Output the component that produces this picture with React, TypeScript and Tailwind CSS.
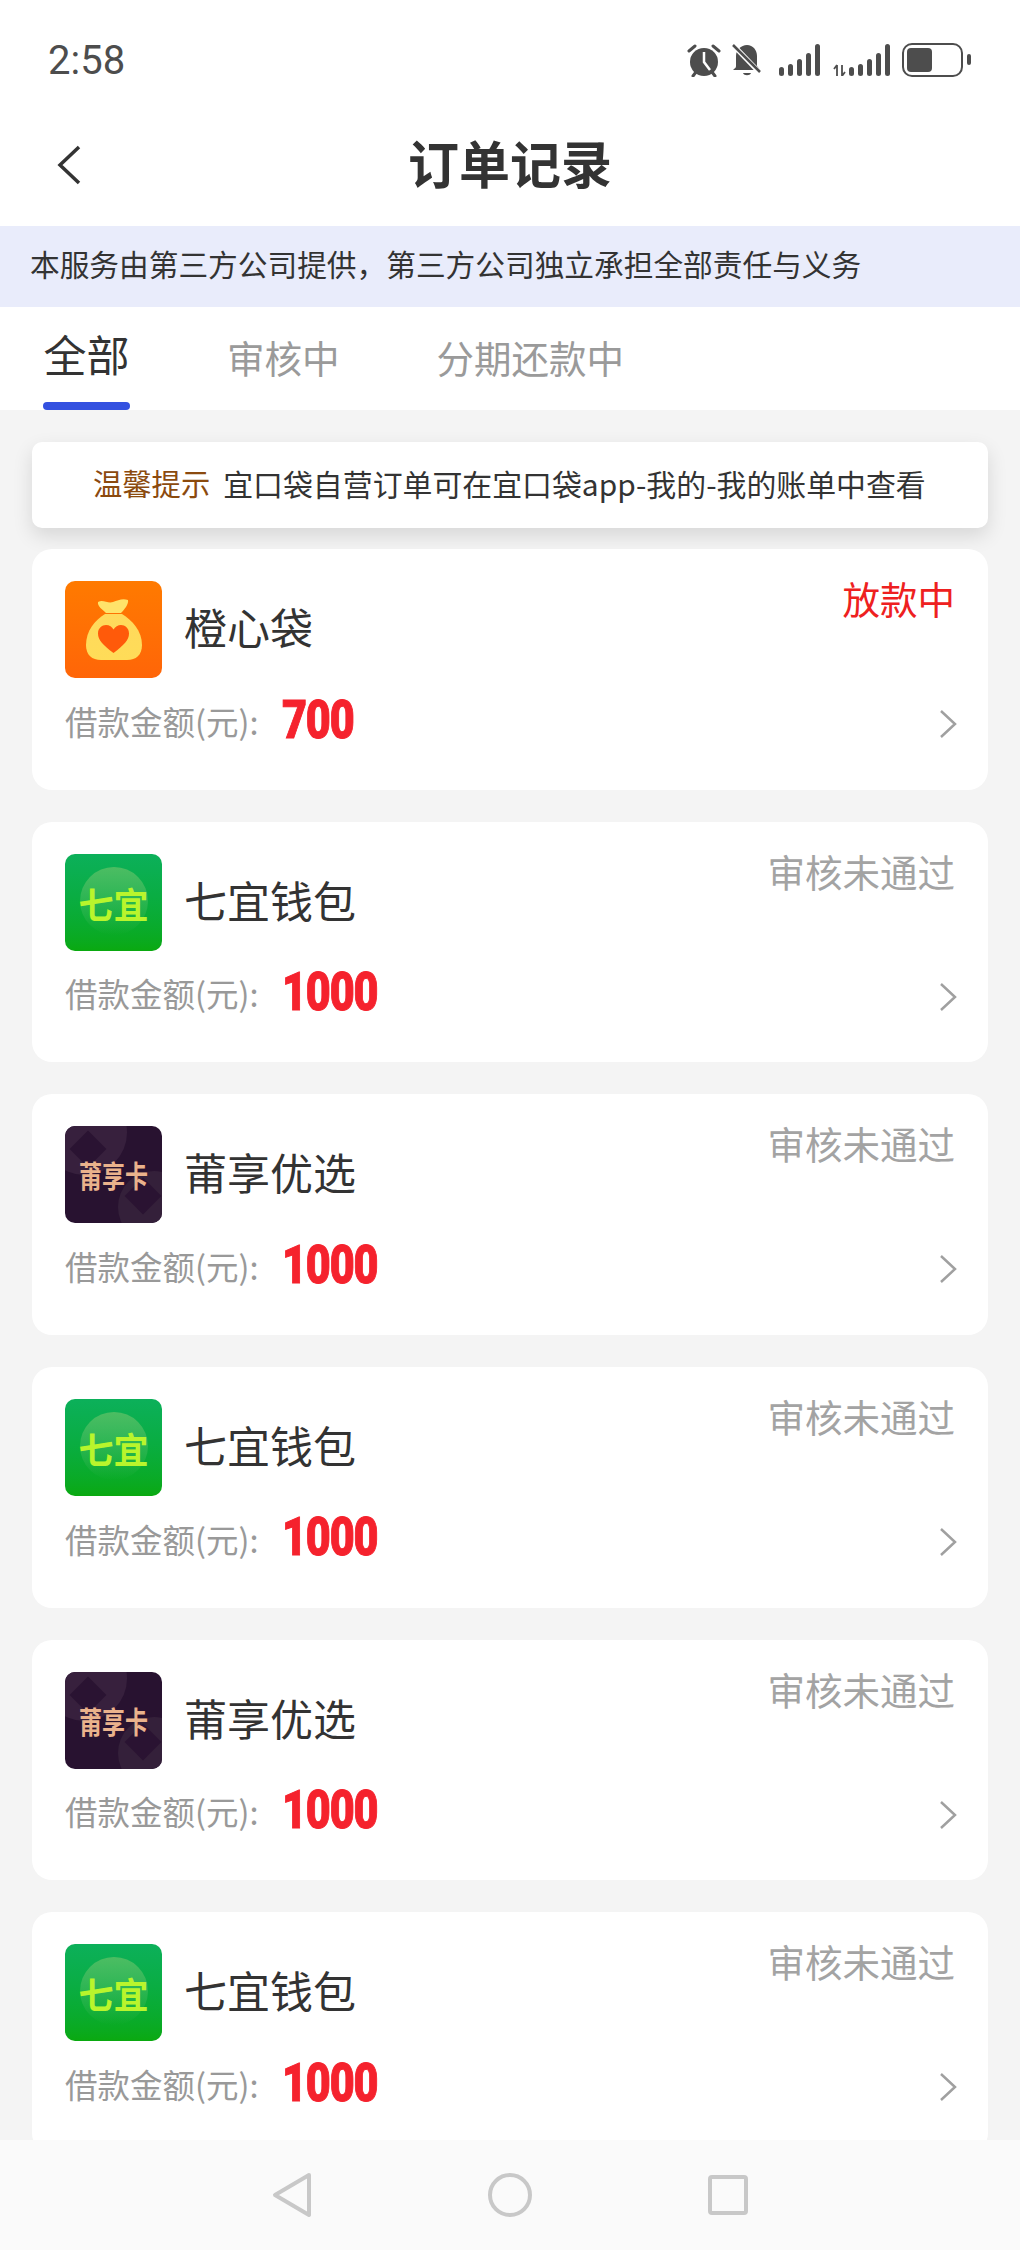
const SANS = '"Noto Sans CJK SC", "Noto Sans", sans-serif';

function OrangeLogo() {
  return (
    <div className="w-[97px] h-[97px] shrink-0 rounded-[10px] bg-gradient-to-b from-[#ff7a00] to-[#ff6508] overflow-hidden">
      <svg viewBox="0 0 97 97" width="97" height="97">
        <defs>
          <linearGradient id="bag" x1="0" y1="0" x2="0" y2="1">
            <stop offset="0" stopColor="#ffd95c" />
            <stop offset="1" stopColor="#ffdc58" />
          </linearGradient>
        </defs>
        <path d="M33 21c5-3 10 2 15 0 5-2 10-4 15-2 1 4-4 10-7 13H41c-3-3-9-7-8-11z" fill="#ffe36a" />
        <path d="M40 33h17c10 6 20 17 20 31 0 10-6 15-15 15H36c-9 0-15-5-15-15 0-14 9-25 19-31z" fill="url(#bag)" />
        <path d="M48.500 72 C38 64 33 59 33 52.500 C33 47 37 44 41 44 C44.500 44 47 46 48.500 48.500 C50 46 53 44 56 44 C60 44 64 47 64 52.500 C64 59 59 64 48.500 72z" fill="#ff5a0a" />
      </svg>
    </div>
  );
}

function GreenLogo() {
  return (
    <div className="relative w-[97px] h-[97px] shrink-0 rounded-[10px] bg-gradient-to-b from-[#0cb05a] to-[#0aa90f] overflow-hidden flex items-center justify-center">
      <div className="absolute left-[15px] top-[13px] w-[68px] h-[68px] rounded-full bg-gradient-to-b from-[#4cbd62] to-[#0cad2f00]"></div>
      <span className="relative text-[35px] leading-none font-bold text-[#b9f52c] whitespace-nowrap scale-y-[1.05]" style={{ fontFamily: SANS }}>七宜</span>
    </div>
  );
}

function PurpleLogo() {
  return (
    <div className="relative w-[97px] h-[97px] shrink-0 rounded-[10px] bg-[#281230] overflow-hidden flex items-center justify-center">
      <div className="absolute left-[-23px] top-[-36px] w-[85px] h-[85px] rounded-full bg-[#37203d]"></div>
      <div className="absolute left-[53px] top-[45px] w-[72px] h-[72px] rounded-full bg-[#34203a]"></div>
      <div className="absolute left-[10px] top-[10px] w-[26px] h-[26px] rotate-45 bg-[#2a1332]"></div>
      <div className="absolute left-[65px] top-[57px] w-[26px] h-[26px] rotate-45 bg-[#2a1332]"></div>
      <span className="relative text-[23px] leading-none font-bold text-[#eab28c] whitespace-nowrap scale-y-[1.3]" style={{ fontFamily: SANS }}>莆享卡</span>
    </div>
  );
}

type Order = { logo: "orange" | "green" | "purple"; name: string; status: string; amount: string; red?: boolean };

const orders: Order[] = [
  { logo: "orange", name: "橙心袋", status: "放款中", amount: "700", red: true },
  { logo: "green", name: "七宜钱包", status: "审核未通过", amount: "1000" },
  { logo: "purple", name: "莆享优选", status: "审核未通过", amount: "1000" },
  { logo: "green", name: "七宜钱包", status: "审核未通过", amount: "1000" },
  { logo: "purple", name: "莆享优选", status: "审核未通过", amount: "1000" },
  { logo: "green", name: "七宜钱包", status: "审核未通过", amount: "1000" },
];

function OrderCard({ o }: { o: Order }) {
  return (
    <div className="h-[240.67px] shrink-0 rounded-[20px] bg-white pl-[33px] pr-[33px] pt-[32px]">
      <div className="flex items-start justify-between">
        <div className="flex items-center gap-[22px]">
          {o.logo === "orange" ? <OrangeLogo /> : o.logo === "green" ? <GreenLogo /> : <PurpleLogo />}
          <span className="text-[43px] leading-none text-[#333333] -mt-[6px]">{o.name}</span>
        </div>
        <span className={`text-[37.500px] leading-none -mt-[2px] ${o.red ? "text-[#ee2020]" : "text-[#a3a3a3]"}`}>{o.status}</span>
      </div>
      <div className="flex items-center justify-between h-[62px] mt-[13px]">
        <div className="flex items-center">
          <span className="text-[32.500px] leading-none text-[#999999] w-[217px] -mt-[2px]">借款金额(元):</span>
          <span className="text-[54px] leading-none font-black text-[#f5222d] tracking-[-1.500px] -mt-[5px] scale-x-[0.8] origin-left [-webkit-text-stroke:1px_#f5222d]" style={{ fontFamily: 'Roboto, sans-serif' }}>{o.amount}</span>
        </div>
        <svg width="20" height="30" viewBox="0 0 20 30" fill="none" className="-mr-[3px] mt-[4px]">
          <path d="M3 2l14 13L3 28" stroke="#a0a0a0" strokeWidth="2.500" />
        </svg>
      </div>
    </div>
  );
}

function StatusIcons() {
  const c = "#4d4d4d";
  return (
    <div className="flex items-center">
      <svg width="34" height="34" viewBox="0 0 34 34" className="mr-[11px]">
        <circle cx="17" cy="19" r="14" fill={c} />
        <path d="M17 9v10l6 8" fill="none" stroke="#fff" strokeWidth="2.500" />
        <path d="M2 8l6-5M32 8l-6-5" stroke={c} strokeWidth="3" strokeLinecap="round" />
        <path d="M6 33l3-4M28 33l-3-4" stroke={c} strokeWidth="3" strokeLinecap="round" />
      </svg>
      <svg width="30" height="34" viewBox="0 0 30 34" className="mr-[17px]">
        <path d="M15 2c6 0 10 5 10 11v10l3 4H1c2-2 3-2 3-4V13C4 7 9 2 15 2z" fill={c} />
        <path d="M11 30h8c-1 3-7 3-8 0z" fill={c} />
        <path d="M2 3l26 27" stroke="#fff" strokeWidth="5" />
        <path d="M1 2l27 27" stroke={c} strokeWidth="2.500" />
      </svg>
      <svg width="42" height="32" viewBox="0 0 42 32" className="mr-[12px]">
        {[[0, 9], [9, 12], [18, 17], [27, 23], [36, 32]].map(([x, h]) => (
          <rect key={x} x={x} y={32 - h} width="5" height={h} rx="2.500" fill={c} />
        ))}
      </svg>
      <svg width="57" height="32" viewBox="0 0 57 32" className="mr-[12px]">
        <path d="M4 32V21M4 21l-3 4M9 21v11M9 32l3-4" stroke={c} strokeWidth="1.800" fill="none" />
        {[[16, 9], [25, 12], [34, 17], [43, 23], [52, 32]].map(([x, h]) => (
          <rect key={x} x={x} y={32 - h} width="5" height={h} rx="2.500" fill={c} />
        ))}
      </svg>
      <div className="relative w-[61px] h-[34px] rounded-[10px] border-[2.500px] border-[#4d4d4d] p-[3px]">
        <div className="w-[25px] h-full rounded-[4px] bg-[#4d4d4d]"></div>
        <div className="absolute right-[-10px] top-[9px] w-[4px] h-[11px] rounded-[2px] bg-[#4d4d4d]"></div>
      </div>
      <div className="w-[7px]"></div>
    </div>
  );
}

export default function App() {
  return (
    <div className="w-[1020px] h-[2250px] flex flex-col overflow-hidden bg-[#f4f4f4]" style={{ fontFamily: SANS }}>
      <div className="h-[120px] shrink-0 bg-white flex items-center justify-between pl-[48px] pr-[50px]">
        <span className="text-[40px] leading-none text-[#4d4d4d] mt-[2px]" style={{ fontFamily: 'Roboto, sans-serif' }}>2:58</span>
        <StatusIcons />
      </div>
      <div className="relative h-[106px] shrink-0 bg-white flex items-center justify-center pb-[21px]">
        <svg width="26" height="40" viewBox="0 0 26 40" fill="none" className="absolute left-[56px] top-[25px]">
          <path d="M23 2L4 20l19 18" stroke="#333333" strokeWidth="3.500" />
        </svg>
        <span className="text-[51px] leading-none font-bold text-[#333333]">订单记录</span>
      </div>
      <div className="h-[81px] shrink-0 bg-[#e9ecfb] flex items-center pl-[30px] pb-[4px] text-[29.700px] text-[#333333] whitespace-nowrap">
        本服务由第三方公司提供，第三方公司独立承担全部责任与义务
      </div>
      <div className="h-[103px] shrink-0 bg-white flex items-start pl-[43px]">
        <div className="flex flex-col items-center w-[87px] h-full">
          <span className="text-[43px] leading-none text-[#333333] mt-[25px]">全部</span>
          <div className="mt-auto w-[87px] h-[8px] rounded-[4px] bg-[#3451e0]"></div>
        </div>
        <span className="text-[37.500px] leading-none text-[#9a9a9a] ml-[97px] mt-[31px]">审核中</span>
        <span className="text-[37.500px] leading-none text-[#9a9a9a] ml-[97px] mt-[31px]">分期还款中</span>
      </div>
      <div className="flex-1 min-h-0 overflow-hidden flex flex-col px-[32px] pt-[32px]">
        <div className="h-[86px] shrink-0 rounded-[10px] bg-white shadow-[0_8px_20px_rgba(0,0,0,0.12)] flex items-center pl-[61px] pb-[4px] whitespace-nowrap">
          <span className="text-[#8b4a0e] text-[29.300px]">温馨提示</span>
          <span className="text-[#333333] ml-[13px] text-[29.900px]">宜口袋自营订单可在宜口袋app-我的-我的账单中查看</span>
        </div>
        <div className="flex flex-col gap-[32px] mt-[21px]">
          {orders.map((o, i) => (
            <OrderCard key={i} o={o} />
          ))}
        </div>
      </div>
      <div className="h-[110px] shrink-0 bg-[#fafafa] relative flex items-center justify-center gap-[176px] pb-[1px]">
        <svg width="40" height="46" viewBox="0 0 40 46" fill="none">
          <path d="M37 3L3 23l34 20z" stroke="#c8c8c8" strokeWidth="4" strokeLinejoin="round" />
        </svg>
        <svg width="44" height="44" viewBox="0 0 44 44" fill="none">
          <circle cx="22" cy="22" r="20" stroke="#c8c8c8" strokeWidth="4" />
        </svg>
        <svg width="40" height="40" viewBox="0 0 40 40" fill="none">
          <rect x="2" y="2" width="36" height="36" rx="2" stroke="#c8c8c8" strokeWidth="4" />
        </svg>
      </div>
    </div>
  );
}
